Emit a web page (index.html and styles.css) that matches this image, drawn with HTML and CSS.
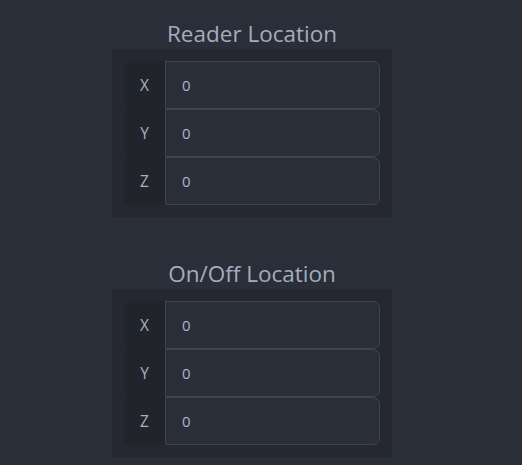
FILE: index.html
```html
<!DOCTYPE html>
<html>
<head>
<meta charset="utf-8">
<link rel="stylesheet" href="styles.css">
</head>
<body>
<div class="page">
  <section class="group">
    <h2 class="title">Reader Location</h2>
    <div class="panel">
      <div class="row"><span class="label">X</span><input class="field" type="text" value="0"></div>
      <div class="row"><span class="label">Y</span><input class="field" type="text" value="0"></div>
      <div class="row"><span class="label">Z</span><input class="field" type="text" value="0"></div>
    </div>
  </section>
  <section class="group">
    <h2 class="title">On/Off Location</h2>
    <div class="panel">
      <div class="row"><span class="label">X</span><input class="field" type="text" value="0"></div>
      <div class="row"><span class="label">Y</span><input class="field" type="text" value="0"></div>
      <div class="row"><span class="label">Z</span><input class="field" type="text" value="0"></div>
    </div>
  </section>
</div>
</body>
</html>
```
FILE: styles.css
```css
html, body {
  margin: 0;
  padding: 0;
  background: #2a2e39;
  font-family: "Open Sans", "Noto Sans", sans-serif;
}
.page {
  padding: 19px 0 0 112px;
  display: flex;
  flex-direction: column;
  align-items: flex-start;
  gap: 42px;
}
.group {
  width: 280px;
  display: flex;
  flex-direction: column;
}
.title {
  margin: 0;
  font-size: 22.5px;
  font-weight: 400;
  line-height: 30px;
  color: #a3adbd;
  text-align: center;
}
.panel {
  background: #252831;
  padding: 12px;
  display: flex;
  flex-direction: column;
}
.row {
  display: flex;
  height: 48px;
}
.label {
  width: 41px;
  flex: none;
  display: flex;
  align-items: center;
  justify-content: center;
  background: #21242b;
  border-radius: 6px 0 0 6px;
  color: #a7b0bf;
  font-size: 15.5px;
}
.field {
  flex: 1;
  min-width: 0;
  box-sizing: border-box;
  height: 48px;
  margin: 0;
  padding: 0 0 0 16px;
  background: #2a2e39;
  border: 1px solid #3e434e;
  border-radius: 0 7px 7px 0;
  color: #a9b6c8;
  font-family: inherit;
  font-size: 15px;
  outline: none;
}
```
